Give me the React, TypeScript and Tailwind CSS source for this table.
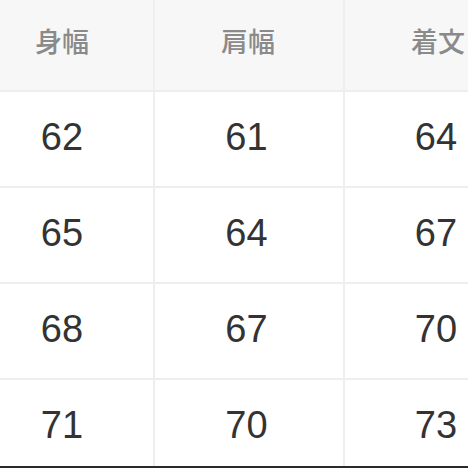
const headers = ["身幅", "肩幅", "着文"];

const rows = [
  ["62", "61", "64"],
  ["65", "64", "67"],
  ["68", "67", "70"],
  ["71", "70", "73"],
];

export default function App() {
  return (
    <div className="w-[468px] h-[468px] overflow-hidden bg-white font-['Liberation_Sans','Noto_Sans_CJK_JP',sans-serif]">
      <div className="ml-[-29px] w-[560px]">
        <div className="grid grid-cols-[184px_190px_186px] h-[92px] bg-[#f7f7f7] border-b-2 border-[#eeeeee]">
          {headers.map((h, i) => (
            <div
              key={h}
              className={
                "flex items-center justify-center pb-[7px] text-[27px] font-medium text-[#8a8a8a] font-['Noto_Sans_CJK_JP',sans-serif] " +
                (i < 2 ? "border-r-2 border-[#efefef]" : "") +
                (i === 1 ? " pr-[2px]" : "")
              }
            >
              {h}
            </div>
          ))}
        </div>
        {rows.map((r, ri) => (
          <div
            key={ri}
            className={
              "grid grid-cols-[184px_190px_186px] border-b-2 " +
              (ri === rows.length - 1 ? "h-[88px] border-[#2a2a2a]" : "h-[96px] border-[#eeeeee]")
            }
          >
            {r.map((v, ci) => (
              <div
                key={ci}
                className={
                  "flex items-center justify-center text-[38px] text-[#333333] " +
                  (ri === rows.length - 1 ? "pt-[4px] " : "pb-[4px] ") +
                  (ci < 2 ? "border-r-2 border-[#eeeeee]" : "") +
                  (ci === 1 ? " pr-[5px]" : "") +
                  (ci === 2 ? " pr-[4px]" : "")
                }
              >
                {v}
              </div>
            ))}
          </div>
        ))}
      </div>
    </div>
  );
}
